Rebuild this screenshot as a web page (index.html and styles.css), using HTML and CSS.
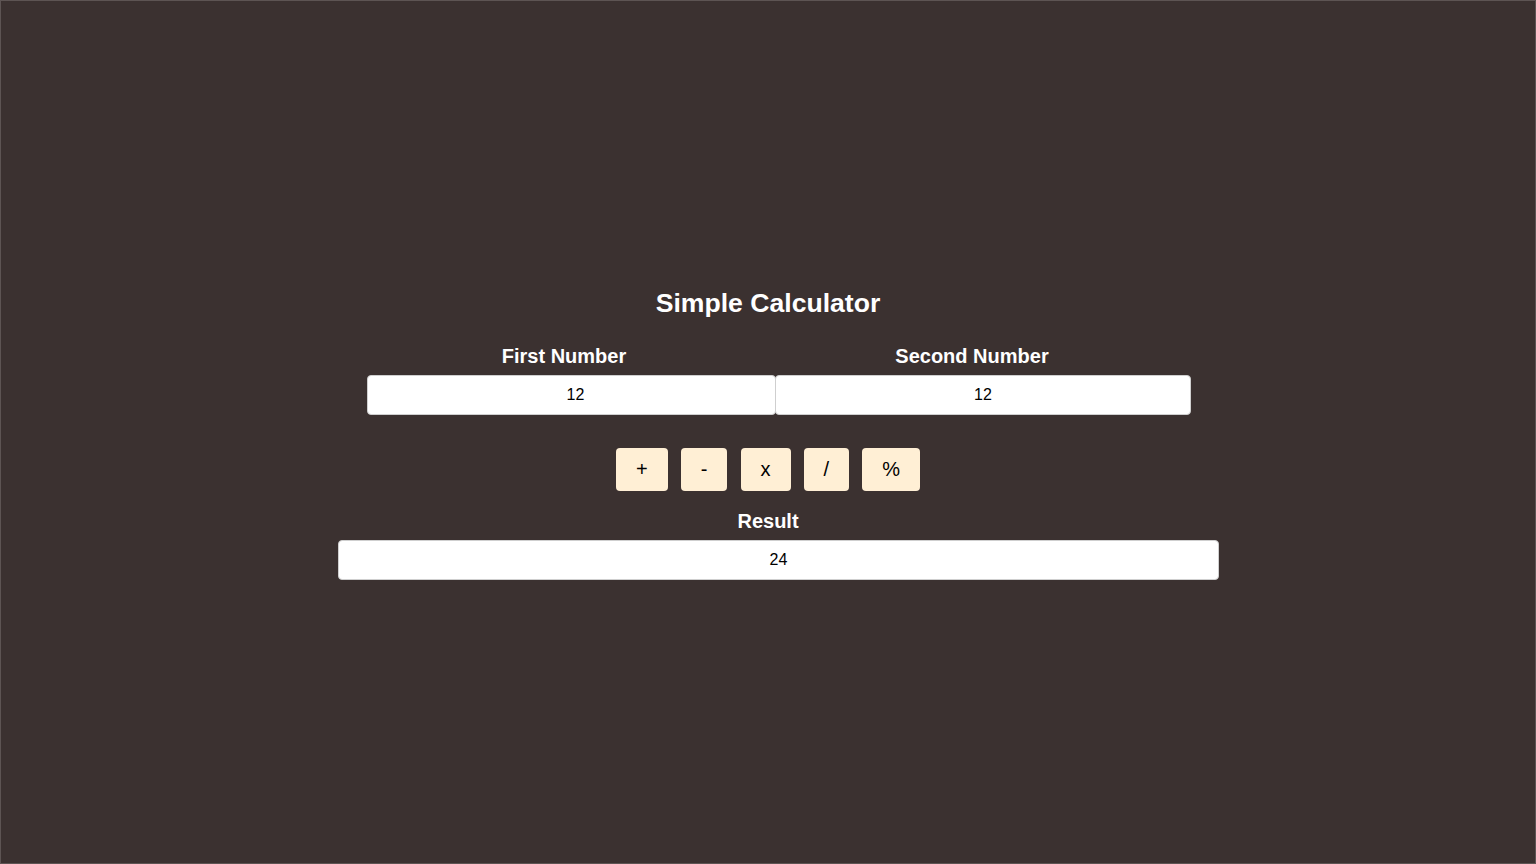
FILE: index.html
```html
<!DOCTYPE html>
<html lang="en">
<head>
<meta charset="utf-8">
<title>Simple Calculator</title>
<link rel="stylesheet" href="styles.css">
</head>
<body>
<div class="page">
  <h1 class="title">Simple Calculator</h1>
  <div class="inputs">
    <div class="group">
      <label class="label" for="a">First Number</label>
      <input class="field field-first" id="a" type="text" value="12">
    </div>
    <div class="group">
      <label class="label" for="b">Second Number</label>
      <input class="field field-second" id="b" type="text" value="12">
    </div>
  </div>
  <div class="ops">
    <button class="op">+</button>
    <button class="op">-</button>
    <button class="op">x</button>
    <button class="op">/</button>
    <button class="op">%</button>
  </div>
  <div class="result">
    <label class="label" for="r">Result</label>
    <input class="field field-result" id="r" type="text" value="24" readonly>
  </div>
</div>
</body>
</html>
```
FILE: styles.css
```css
html, body {
  margin: 0;
  padding: 0;
}
body {
  font-family: "Liberation Sans", Arial, sans-serif;
  background: #3b3130;
}
.page {
  box-sizing: border-box;
  height: 864px;
  border: 1px solid #5d5453;
  background: #3b3130;
  display: flex;
  flex-direction: column;
  align-items: center;
  justify-content: flex-start;
  padding-top: 286.5px;
}
.title {
  margin: 0;
  color: #ffffff;
  font-size: 26.6px;
  font-weight: bold;
  line-height: 30px;
}
.inputs {
  display: flex;
  gap: 14px;
  width: 802px;
  margin-top: 27px;
}
.group {
  width: 394px;
  display: flex;
  flex-direction: column;
  align-items: flex-start;
}
.label {
  display: block;
  width: 100%;
  text-align: center;
  color: #ffffff;
  font-size: 20px;
  font-weight: bold;
  line-height: 23px;
  margin-bottom: 7px;
}
.field {
  box-sizing: border-box;
  height: 40px;
  border: 1px solid #cfcfcf;
  border-radius: 4px;
  background: #ffffff;
  color: #000000;
  font-family: "Liberation Sans", Arial, sans-serif;
  font-size: 16px;
  text-align: center;
  padding: 0;
  outline: none;
}
.field-first {
  width: 409px;
  padding-left: 8px;
}
.field-second { width: 416px; }
.field-result { width: 881px; }
.ops {
  display: flex;
  gap: 13.1px;
  margin-top: 33px;
}
.op {
  border: 0;
  border-radius: 4px;
  background: #ffefd5;
  color: #000000;
  font-family: "Liberation Sans", Arial, sans-serif;
  font-size: 20px;
  line-height: 23px;
  padding: 10px 20px;
  cursor: pointer;
}
.result {
  width: 860px;
  margin-top: 19px;
  display: flex;
  flex-direction: column;
  align-items: flex-start;
}
```
